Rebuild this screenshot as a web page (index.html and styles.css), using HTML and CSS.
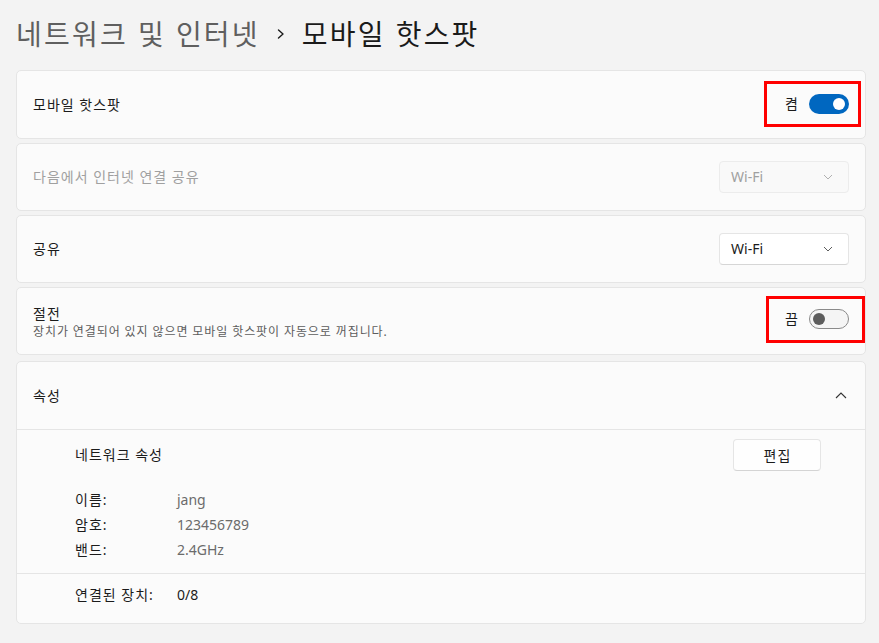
FILE: index.html
```html
<!DOCTYPE html>
<html lang="ko">
<head>
<meta charset="utf-8">
<title>모바일 핫스팟</title>
<link rel="stylesheet" href="styles.css">
</head>
<body>
<div class="page">
  <header class="crumbs">
    <span class="crumb-parent">네트워크 및 인터넷</span>
    <svg class="crumb-sep" width="8" height="10" viewBox="0 0 8 10"><path d="M1.5 1 L6 5 L1.5 9" fill="none" stroke="#1a1a1a" stroke-width="1.4" stroke-linecap="round" stroke-linejoin="round"/></svg>
    <span class="crumb-current">모바일 핫스팟</span>
  </header>

  <div class="cards">
    <div class="card row first">
      <div class="label">모바일 핫스팟</div>
      <div class="mark mark-1">
        <span class="state">켬</span>
        <span class="toggle on"><span class="knob"></span></span>
      </div>
    </div>

    <div class="card row disabled">
      <div class="label">다음에서 인터넷 연결 공유</div>
      <div class="select">
        <span>Wi-Fi</span>
        <svg width="10" height="6" viewBox="0 0 10 6"><path d="M1 1 L5 5 L9 1" fill="none" stroke="currentColor" stroke-width="1"/></svg>
      </div>
    </div>

    <div class="card row">
      <div class="label">공유</div>
      <div class="select">
        <span>Wi-Fi</span>
        <svg width="10" height="6" viewBox="0 0 10 6"><path d="M1 1 L5 5 L9 1" fill="none" stroke="currentColor" stroke-width="1"/></svg>
      </div>
    </div>

    <div class="card row">
      <div class="text">
        <div class="label">절전</div>
        <div class="desc">장치가 연결되어 있지 않으면 모바일 핫스팟이 자동으로 꺼집니다.</div>
      </div>
      <div class="mark mark-2">
        <span class="state">끔</span>
        <span class="toggle off"><span class="knob"></span></span>
      </div>
    </div>

    <div class="card expander">
      <div class="row exp-head">
        <div class="label">속성</div>
        <svg class="chev-up" width="12" height="7" viewBox="0 0 12 7"><path d="M1 6 L6 1 L11 6" fill="none" stroke="#333" stroke-width="1.1"/></svg>
      </div>
      <div class="exp-section">
        <div class="props-head">
          <div class="label">네트워크 속성</div>
          <button class="btn">편집</button>
        </div>
        <div class="props">
          <span class="k">이름:</span><span class="v">jang</span>
          <span class="k">암호:</span><span class="v">123456789</span>
          <span class="k">밴드:</span><span class="v">2.4GHz</span>
        </div>
      </div>
      <div class="exp-section last">
        <div class="props">
          <span class="k">연결된 장치:</span><span class="v dark">0/8</span>
        </div>
      </div>
    </div>
  </div>
</div>
</body>
</html>
```

FILE: styles.css
```css
* { box-sizing: border-box; }
html, body { margin: 0; padding: 0; }
body {
  background: #f3f3f3;
  font-family: "Noto Sans", "Noto Sans CJK KR", sans-serif;
  color: #1b1b1b;
  font-size: 14px;
  letter-spacing: 1px;
}
.page { padding: 13px 13px 0 16px; }
.crumbs {
  display: flex;
  align-items: center;
  height: 40px;
  font-family: "Noto Sans CJK KR", sans-serif;
  font-size: 28px;
  line-height: 40px;
  letter-spacing: 2.2px;
  margin-bottom: 17px;
}
.crumb-parent { color: #5f5f5f; }
.crumb-sep { margin: 2px 17px 0 17px; }
.crumb-current { color: #1a1a1a; }

.cards { display: flex; flex-direction: column; gap: 4px; }
.card {
  background: #fbfbfb;
  border: 1px solid #e5e5e5;
  border-radius: 5px;
}
.row {
  display: flex;
  align-items: center;
  justify-content: space-between;
  height: 68px;
  padding: 0 16px;
}
.row.first { height: 69px; }
.label { line-height: 20px; }
.desc { font-size: 12px; line-height: 16px; color: #5d5d5d; letter-spacing: 0.9px; }
.text { display: flex; flex-direction: column; padding-top: 2px; }
.disabled .label { color: #a0a0a0; }

.mark {
  display: flex;
  align-items: center;
  border: 3px solid #ff0000;
}
.mark-1 { padding: 10px 9px 10px 18px; margin-right: -12px; margin-bottom: 2px; height: 46px; }
.mark-2 { padding: 10px 13px 10px 16px; margin-right: -16px; margin-bottom: 4px; height: 47px; }
.state { line-height: 20px; margin-right: 10px; }

.toggle {
  position: relative;
  width: 40px;
  height: 20px;
  border-radius: 10px;
  display: inline-block;
}
.toggle.on { background: #0067c0; }
.toggle.off { background: #f5f5f5; border: 1px solid #8a8a8a; }
.knob { position: absolute; width: 12px; height: 12px; border-radius: 50%; top: 4px; }
.on .knob { background: #fff; right: 4px; }
.off .knob { background: #5d5d5d; left: 3px; top: 3px; }

.select {
  width: 130px;
  height: 32px;
  display: flex;
  align-items: center;
  justify-content: space-between;
  padding: 0 15px 0 11px;
  background: #fff;
  border: 1px solid #e5e5e5;
  border-bottom-color: #d6d6d6;
  border-radius: 4px;
  color: #1b1b1b;
  letter-spacing: 0;
  margin-top: -1px;
}
.select svg { color: #5d5d5d; }
.disabled .select { background: #f9f9f9; border-color: #ececec; color: #a0a0a0; }
.disabled .select svg { color: #b0b0b0; }

.expander { display: flex; flex-direction: column; margin-top: 2px; }
.exp-head { border-bottom: 1px solid #e5e5e5; height: 68px; }
.chev-up { margin-right: 2px; }
.exp-section { padding: 9px 44px 11px 58px; border-bottom: 1px solid #e5e5e5; }
.exp-section.last { border-bottom: none; padding: 11px 44px 18px 58px; }
.props-head { display: flex; align-items: center; justify-content: space-between; margin-bottom: 16px; }
.btn {
  width: 88px;
  height: 32px;
  background: #fefefe;
  border: 1px solid #e5e5e5;
  border-bottom-color: #d4d4d4;
  border-radius: 4px;
  font-family: "Noto Sans CJK KR", sans-serif;
  font-size: 14px;
  letter-spacing: 1px;
  color: #1b1b1b;
  padding: 0 0 0 1px;
}
.props {
  display: grid;
  grid-template-columns: 102px 1fr;
  line-height: 25px;
}
.exp-section.last .props { line-height: 20px; }
.v { color: #6b6b6b; letter-spacing: 0; }
.v.dark { color: #1b1b1b; }
```
